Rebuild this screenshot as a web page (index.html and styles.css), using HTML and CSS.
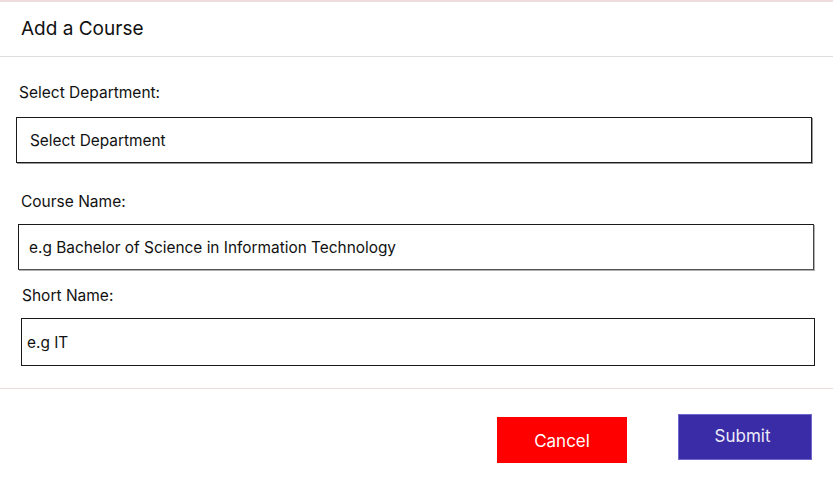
FILE: index.html
```html
<!DOCTYPE html>
<html lang="en">
<head>
<meta charset="utf-8">
<title>Add a Course</title>
<link rel="stylesheet" href="styles.css">
</head>
<body>
<div class="modal">
  <div class="modal-header">
    <h1 class="title">Add a Course</h1>
  </div>
  <form class="modal-body">
    <div class="group group-dept">
      <label class="label">Select Department:</label>
      <div class="field field-select">Select Department</div>
    </div>
    <div class="group group-course">
      <label class="label">Course Name:</label>
      <input class="field field-course" type="text" placeholder="e.g Bachelor of Science in Information Technology">
    </div>
    <div class="group group-short">
      <label class="label">Short Name:</label>
      <input class="field field-short" type="text" placeholder="e.g IT">
    </div>
  </form>
  <div class="modal-footer">
    <button class="btn btn-cancel" type="button">Cancel</button>
    <button class="btn btn-submit" type="button">Submit</button>
  </div>
</div>
</body>
</html>
```
FILE: styles.css
```css
* { box-sizing: border-box; }
html, body { margin: 0; padding: 0; background: #fff; }
body {
  font-family: Inter, "Noto Sans", "Liberation Sans", sans-serif;
  color: #111;
}
.modal {
  width: 833px;
  border-top: 2px solid #efdcdc;
}
.modal-header {
  height: 55px;
  border-bottom: 1px solid #dedede;
  display: flex;
  align-items: center;
  padding-left: 21px;
}
.title {
  margin: 0;
  font-size: 19px;
  font-weight: 400;
  color: #111;
  line-height: 24px;
  padding-bottom: 1px;
}
.modal-body {
  padding-top: 25px;
  padding-bottom: 22px;
  border-bottom: 1px solid #efdcdc;
}
.group { display: flex; flex-direction: column; }
.label {
  font-size: 15.5px;
  line-height: 20px;
  color: #111;
  padding-top: 1px;
}
.field {
  height: 46px;
  border: 1px solid #1a1a1a;
  font-family: inherit;
  font-size: 15.4px;
  color: #111;
  background: #fff;
  display: flex;
  align-items: center;
  outline: none;
  margin: 0;
}
.field::placeholder { color: #111; opacity: 1; }
.group-dept .label { margin-left: 19px; }
.field-select {
  margin-top: 14px;
  margin-left: 16px;
  width: 796px;
  padding-left: 13px;
  box-shadow: 1px 1px 0 #9a9a9a;
}
.group-course { margin-top: 28px; }
.group-course .label { margin-left: 21px; }
.field-course {
  margin-top: 12px;
  margin-left: 18px;
  width: 796px;
  padding-left: 10px;
  border-right-color: #444;
  border-bottom-color: #555;
  box-shadow: 1px 1px 0 #b0b0b0;
}
.group-short { margin-top: 15px; }
.group-short .label { margin-left: 22px; }
.field-short {
  margin-top: 12px;
  margin-left: 21px;
  width: 794px;
  height: 48px;
  padding-left: 5px;
}
.modal-footer {
  display: flex;
  justify-content: flex-end;
  align-items: flex-start;
  padding-top: 25px;
  padding-right: 21px;
  gap: 51px;
}
.btn {
  font-family: inherit;
  font-size: 17px;
  height: 46px;
  border: none;
  cursor: pointer;
}
.btn-cancel {
  margin-top: 3px;
  width: 130px;
  background: #ff0000;
  color: #fff;
  padding-top: 2px;
}
.btn-submit {
  width: 134px;
  background: #3a2ba6;
  border: 1px solid #6f68cc;
  color: #ececf8;
  padding-bottom: 4px;
  padding-right: 11px;
}
```
